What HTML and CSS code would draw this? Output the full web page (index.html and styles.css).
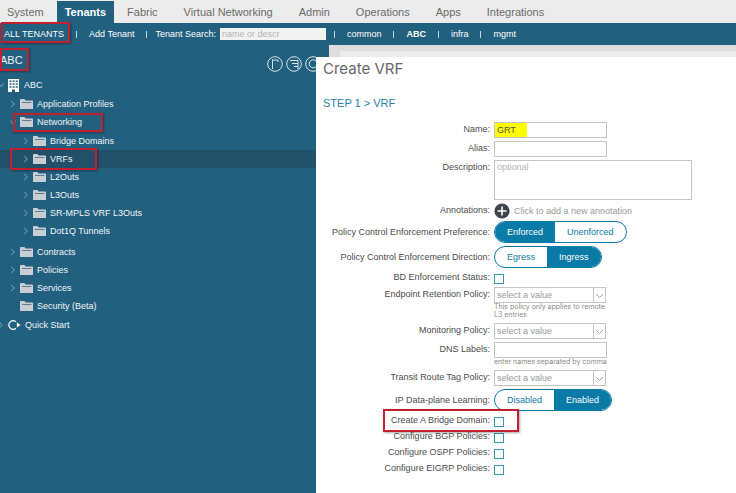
FILE: index.html
```html
<!DOCTYPE html>
<html lang="en">
<head>
    <meta charset="UTF-8">
    <meta name="viewport" content="width=device-width, initial-scale=1.0">
    <title>Create VRF</title>
    <link rel="stylesheet" href="styles.css">
</head>
<body>
    <!-- icons used more than once -->
    <svg class="sprite" aria-hidden="true">
        <symbol id="folder" viewBox="0 0 13 10">
            <path d="M0 .8 Q0 0 .8 0 H4.4 L5.6 1.4 H12.2 Q13 1.4 13 2.2 V10 H0 Z" fill="#c9ced4"/>
            <path d="M2 3.5 H11.5" stroke="#5b7280" stroke-width=".9"/>
        </symbol>
        <symbol id="closed" viewBox="0 0 6 8">
            <path d="M1.2 1 L4.4 4 L1.2 7" fill="none" stroke="#7fa9bd" stroke-width="1"/>
        </symbol>
        <symbol id="open" viewBox="0 0 6 8">
            <path d="M.4 2.5 L3 5.7 L5.6 2.5" fill="none" stroke="#7fa9bd" stroke-width="1"/>
        </symbol>
        <symbol id="down" viewBox="0 0 12 14">
            <path d="M.5 0 V14" stroke="#c4c4c4"/>
            <path d="M3 6 L6.5 9.5 L10 6" fill="none" stroke="#a0a0a0"/>
        </symbol>
    </svg>

    <nav class="tabs">
        <a href="#">System</a>
        <a href="#" class="active">Tenants</a>
        <a href="#">Fabric</a>
        <a href="#">Virtual Networking</a>
        <a href="#">Admin</a>
        <a href="#">Operations</a>
        <a href="#">Apps</a>
        <a href="#">Integrations</a>
    </nav>

    <nav class="subnav">
        <a href="#" class="marked mark-all">ALL TENANTS</a>
        <i class="sep"></i>
        <a href="#">Add Tenant</a>
        <i class="sep"></i>
        <span class="search">
            <label for="tenantSearch">Tenant Search:</label>
            <input type="text" id="tenantSearch" placeholder="name or descr">
        </span>
        <i class="sep"></i>
        <a href="#">common</a>
        <i class="sep"></i>
        <a href="#" class="current">ABC</a>
        <i class="sep"></i>
        <a href="#">infra</a>
        <i class="sep"></i>
        <a href="#">mgmt</a>
    </nav>

    <div class="main">
        <aside class="sidebar">
            <div class="side-head">
                <h2 class="marked mark-tenant">ABC</h2>
                <div class="tools">
                    <button type="button" aria-label="Expand">
                        <svg viewBox="0 0 16 16"><circle cx="8" cy="8" r="7.3"/><path d="M5.5 13 V3.5 M5.5 4 H11 V6"/></svg>
                    </button>
                    <button type="button" aria-label="Collapse">
                        <svg viewBox="0 0 16 16"><circle cx="8" cy="8" r="7.3"/><path d="M4 4.5 H12 V13 M6 7.5 H12 M8 10.5 H12"/></svg>
                    </button>
                    <button type="button" aria-label="Refresh">
                        <svg viewBox="0 0 16 16"><circle cx="8" cy="8" r="7.3"/><path d="M11 5 A4 4 0 1 0 12 9"/></svg>
                    </button>
                </div>
            </div>

            <ul class="tree">
                <li>
                    <div class="node">
                        <svg class="arrow"><use href="#open"/></svg>
                        <svg class="building" viewBox="0 0 11 13">
                            <path d="M0 0 H11 V12 H11 V13 H7 V10.5 H4 V13 H0 Z" fill="#fff"/>
                            <path d="M1.5 2.2 H9.8 M1.5 5 H9.8 M1.5 7.9 H9.8" stroke="#22607f" stroke-width="1.5" stroke-dasharray="2 1.1"/>
                        </svg>
                        <a href="#">ABC</a>
                    </div>
                    <ul>
                        <li><div class="node"><svg class="arrow"><use href="#closed"/></svg><svg class="folder"><use href="#folder"/></svg><a href="#">Application Profiles</a></div></li>
                        <li>
                            <div class="node marked mark-net"><svg class="arrow"><use href="#open"/></svg><svg class="folder"><use href="#folder"/></svg><a href="#">Networking</a></div>
                            <ul class="inner">
                                <li><div class="node"><svg class="arrow"><use href="#closed"/></svg><svg class="folder"><use href="#folder"/></svg><a href="#">Bridge Domains</a></div></li>
                                <li><div class="node selected marked mark-vrf"><svg class="arrow"><use href="#closed"/></svg><svg class="folder"><use href="#folder"/></svg><a href="#">VRFs</a></div></li>
                                <li><div class="node"><svg class="arrow"><use href="#closed"/></svg><svg class="folder"><use href="#folder"/></svg><a href="#">L2Outs</a></div></li>
                                <li><div class="node"><svg class="arrow"><use href="#closed"/></svg><svg class="folder"><use href="#folder"/></svg><a href="#">L3Outs</a></div></li>
                                <li><div class="node"><svg class="arrow"><use href="#closed"/></svg><svg class="folder"><use href="#folder"/></svg><a href="#">SR-MPLS VRF L3Outs</a></div></li>
                                <li><div class="node"><svg class="arrow"><use href="#closed"/></svg><svg class="folder"><use href="#folder"/></svg><a href="#">Dot1Q Tunnels</a></div></li>
                            </ul>
                        </li>
                        <li><div class="node"><svg class="arrow"><use href="#closed"/></svg><svg class="folder"><use href="#folder"/></svg><a href="#">Contracts</a></div></li>
                        <li><div class="node"><svg class="arrow"><use href="#closed"/></svg><svg class="folder"><use href="#folder"/></svg><a href="#">Policies</a></div></li>
                        <li><div class="node"><svg class="arrow"><use href="#closed"/></svg><svg class="folder"><use href="#folder"/></svg><a href="#">Services</a></div></li>
                        <li><div class="node"><svg class="arrow"></svg><svg class="folder"><use href="#folder"/></svg><a href="#">Security (Beta)</a></div></li>
                    </ul>
                </li>
                <li>
                    <div class="node">
                        <svg class="arrow"><use href="#closed"/></svg>
                        <svg class="quick" viewBox="0 0 13 10">
                            <path d="M7.9 1.8 A4.2 4.2 0 1 0 7.9 8.2" fill="none" stroke="#fff" stroke-width="1.2"/>
                            <path d="M8.8 2.6 L12.6 5 L8.8 7.4 Z" fill="#fff"/>
                        </svg>
                        <a href="#">Quick Start</a>
                    </div>
                </li>
            </ul>
        </aside>

        <div class="content"><div class="panel"></div></div>

        <section class="dialog" role="dialog" aria-labelledby="dialogTitle">
            <h1 id="dialogTitle">Create VRF</h1>
            <h3>STEP 1 &gt; VRF</h3>

            <form class="form">
                <div class="row">
                    <label for="name">Name:</label>
                    <input type="text" id="name" class="text highlight" value="GRT">
                </div>
                <div class="row">
                    <label for="alias">Alias:</label>
                    <input type="text" id="alias" class="text">
                </div>
                <div class="row">
                    <label for="description">Description:</label>
                    <textarea id="description" placeholder="optional"></textarea>
                </div>
                <div class="row">
                    <label for="annotation">Annotations:</label>
                    <button type="button" id="annotation" class="add">
                        <svg viewBox="0 0 16 16"><circle cx="8" cy="8" r="7.6" fill="#3f454a"/><path d="M8 3.5 V12.5 M3.5 8 H12.5" stroke="#fff" stroke-width="1.6"/></svg>
                        Click to add a new annotation
                    </button>
                </div>
                <div class="row tall">
                    <label for="enforced">Policy Control Enforcement Preference:</label>
                    <div class="toggle">
                        <button type="button" id="enforced" class="on">Enforced</button>
                        <button type="button">Unenforced</button>
                    </div>
                </div>
                <div class="row tall">
                    <label for="egress">Policy Control Enforcement Direction:</label>
                    <div class="toggle">
                        <button type="button" id="egress">Egress</button>
                        <button type="button" class="on">Ingress</button>
                    </div>
                </div>
                <div class="row check">
                    <label for="bdStatus">BD Enforcement Status:</label>
                    <input type="checkbox" id="bdStatus">
                </div>
                <div class="row">
                    <label for="retention">Endpoint Retention Policy:</label>
                    <div class="field">
                        <div class="select">
                            <select id="retention"><option>select a value</option></select>
                            <svg><use href="#down"/></svg>
                        </div>
                        <p class="help">This policy only applies to remote L3 entries</p>
                    </div>
                </div>
                <div class="row">
                    <label for="monitoring">Monitoring Policy:</label>
                    <div class="select">
                        <select id="monitoring"><option>select a value</option></select>
                        <svg><use href="#down"/></svg>
                    </div>
                </div>
                <div class="row">
                    <label for="dns">DNS Labels:</label>
                    <div class="field">
                        <input type="text" id="dns" class="text">
                        <p class="help">enter names separated by comma</p>
                    </div>
                </div>
                <div class="row">
                    <label for="routeTag">Transit Route Tag Policy:</label>
                    <div class="select">
                        <select id="routeTag"><option>select a value</option></select>
                        <svg><use href="#down"/></svg>
                    </div>
                </div>
                <div class="row tall">
                    <label for="learningOff">IP Data-plane Learning:</label>
                    <div class="toggle">
                        <button type="button" id="learningOff">Disabled</button>
                        <button type="button" class="on">Enabled</button>
                    </div>
                </div>
                <div class="row check marked mark-bd">
                    <label for="bridge">Create A Bridge Domain:</label>
                    <input type="checkbox" id="bridge">
                </div>
                <div class="row check">
                    <label for="bgp">Configure BGP Policies:</label>
                    <input type="checkbox" id="bgp">
                </div>
                <div class="row check">
                    <label for="ospf">Configure OSPF Policies:</label>
                    <input type="checkbox" id="ospf">
                </div>
                <div class="row check">
                    <label for="eigrp">Configure EIGRP Policies:</label>
                    <input type="checkbox" id="eigrp">
                </div>
            </form>
        </section>
    </div>
</body>
</html>
```
FILE: styles.css
```css
*, *::after {
    box-sizing: border-box;
}
body {
    margin: 0;
    min-height: 100vh;
    display: flex;
    flex-direction: column;
    font-family: "Liberation Sans", Arial, sans-serif;
    font-size: 9px;
    line-height: 12px;
    color: #4c4c4c;
    background: #fff;
    overflow: hidden;
}
a {
    color: inherit;
    text-decoration: none;
}
ul {
    list-style: none;
    margin: 0;
    padding: 0;
}
h1, h2, h3, p {
    margin: 0;
    font-weight: 400;
}
input, select, textarea, button {
    font: inherit;
    margin: 0;
}
button {
    background: none;
    border: none;
    padding: 0;
    cursor: pointer;
}
.sprite {
    display: none;
}

/* top bars */
.tabs {
    display: flex;
    height: 23px;
    padding: 1px 0 0;
    background: #ececec;
    font-size: 11px;
    line-height: 22px;
    color: #6b6b6b;
    white-space: nowrap;
}
.tabs a {
    padding: 0 13px;
}
.tabs a:first-child {
    padding-left: 7px;
}
.tabs .active {
    padding: 0 8px;
    background: #22607f;
    color: #fff;
    font-weight: 600;
}
.subnav {
    display: flex;
    align-items: center;
    gap: 12px;
    height: 22px;
    padding-left: 4px;
    background: #22607f;
    color: #fff;
    white-space: nowrap;
}
.sep {
    width: 1px;
    height: 7px;
    background: #c5d6df;
}
.search {
    display: flex;
    align-items: center;
    gap: 4px;
    margin: 0 -4px;
}
.search input {
    width: 106px;
    height: 12px;
    padding: 0 2px;
    border: none;
    background: #f2f2f2;
}
.current {
    font-weight: 700;
}
::placeholder {
    color: #b4b4b4;
    opacity: 1;
}

/* red call-outs */
.marked {
    position: relative;
}
.marked::after {
    content: "";
    position: absolute;
    border: 2px solid #c3202f;
    box-shadow: 1px 1px 2px rgba(0, 0, 0, .35);
    pointer-events: none;
}
.mark-all::after {
    inset: -6px -6px -3px -3px;
}
.mark-tenant::after {
    inset: -4px -6px -3px 0;
}
.mark-net::after {
    left: 13px;
    top: 0;
    width: 90px;
    height: 19px;
}
.mark-vrf::after {
    left: 10px;
    top: -2px;
    width: 87px;
    height: 22px;
}
.mark-bd::after {
    left: 60px;
    top: -5px;
    width: 136px;
    height: 23px;
}

/* sidebar */
.main {
    position: relative;
    flex: 1;
    display: flex;
}
.sidebar {
    width: 329px;
    background: #22607f;
    color: #f1f6f8;
}
.side-head {
    display: flex;
    justify-content: space-between;
    height: 31px;
    padding: 7px 8px 0 0;
}
.side-head h2 {
    align-self: flex-start;
    font-size: 11px;
    line-height: 16px;
}
.tools {
    display: flex;
    gap: 3px;
    padding-top: 4px;
}
.tools button, .tools svg {
    display: block;
    width: 16px;
    height: 16px;
}
.tools svg {
    fill: none;
    stroke: #d6e4eb;
}
.node {
    display: flex;
    align-items: center;
    height: 18px;
}
.arrow {
    width: 6px;
    height: 8px;
    margin-right: 4px;
}
.folder, .quick {
    width: 13px;
    height: 10px;
    margin-right: 4px;
}
.building {
    width: 11px;
    height: 13px;
    margin-right: 5px;
}
.tree > li > .node {
    margin-left: -2px;
}
.tree ul {
    margin: 1px 0;
}
.tree ul .node {
    padding-left: 10px;
}
.tree .inner {
    margin: 1px 0 3px;
}
.tree .inner .node {
    padding-left: 23px;
}
.selected {
    background: #225068;
}
.content {
    flex: 1;
    padding: 6px 0 0 11px;
    background: #dedede;
}
.panel {
    height: 100%;
    background: #ececec;
}

/* dialog */
.dialog {
    position: absolute;
    inset: 12px 0 0 316px;
    padding: 0 7px;
    background: #fff;
}
.dialog h1 {
    font-family: Inter, "Liberation Sans", sans-serif;
    font-size: 15px;
    line-height: 24px;
    color: #666;
}
.dialog h3 {
    padding-top: 14px;
    font-size: 11px;
    line-height: 16px;
    color: #1b80a5;
}
.form {
    display: flex;
    flex-direction: column;
    gap: 3px;
    padding-top: 11px;
}
.row {
    display: flex;
    align-items: flex-start;
    gap: 4px;
}
.row > label {
    width: 167px;
    line-height: 15px;
    text-align: right;
    white-space: nowrap;
}
.tall > label {
    line-height: 22px;
}
.text, textarea, select {
    display: block;
    width: 113px;
    height: 16px;
    padding: 0 2px;
    border: 1px solid #c4c4c4;
    border-radius: 0;
    background: #fff;
    color: #555;
}
textarea {
    width: 198px;
    height: 40px;
    resize: none;
}
.highlight {
    background: linear-gradient(#ff0, #ff0) 0 0 / 32px 100% no-repeat;
}
.add {
    display: flex;
    align-items: center;
    gap: 4px;
    height: 15px;
    color: #999;
}
.add svg {
    width: 16px;
    height: 16px;
}
.toggle {
    display: flex;
    height: 22px;
    border: 1px solid #0a7aa6;
    border-radius: 11px;
    overflow: hidden;
}
.toggle button {
    padding: 0 12px;
    color: #0a7aa6;
}
.toggle .on {
    background: #0a7aa6;
    color: #fff;
}
.check {
    align-items: flex-end;
    height: 13px;
}
.check > label {
    line-height: 14px;
}
.check input {
    appearance: none;
    width: 10px;
    height: 10px;
    border: 1px solid #3c95b8;
}
.select {
    position: relative;
    width: 112px;
}
.select select {
    appearance: none;
    width: 112px;
    color: #999;
}
.select svg {
    position: absolute;
    top: 1px;
    right: 1px;
    width: 12px;
    height: 14px;
    pointer-events: none;
}
.help {
    width: 113px;
    margin-bottom: 1px;
    font-family: Inter, "Liberation Sans", sans-serif;
    font-size: 7px;
    line-height: 8px;
    color: #888;
}
```
